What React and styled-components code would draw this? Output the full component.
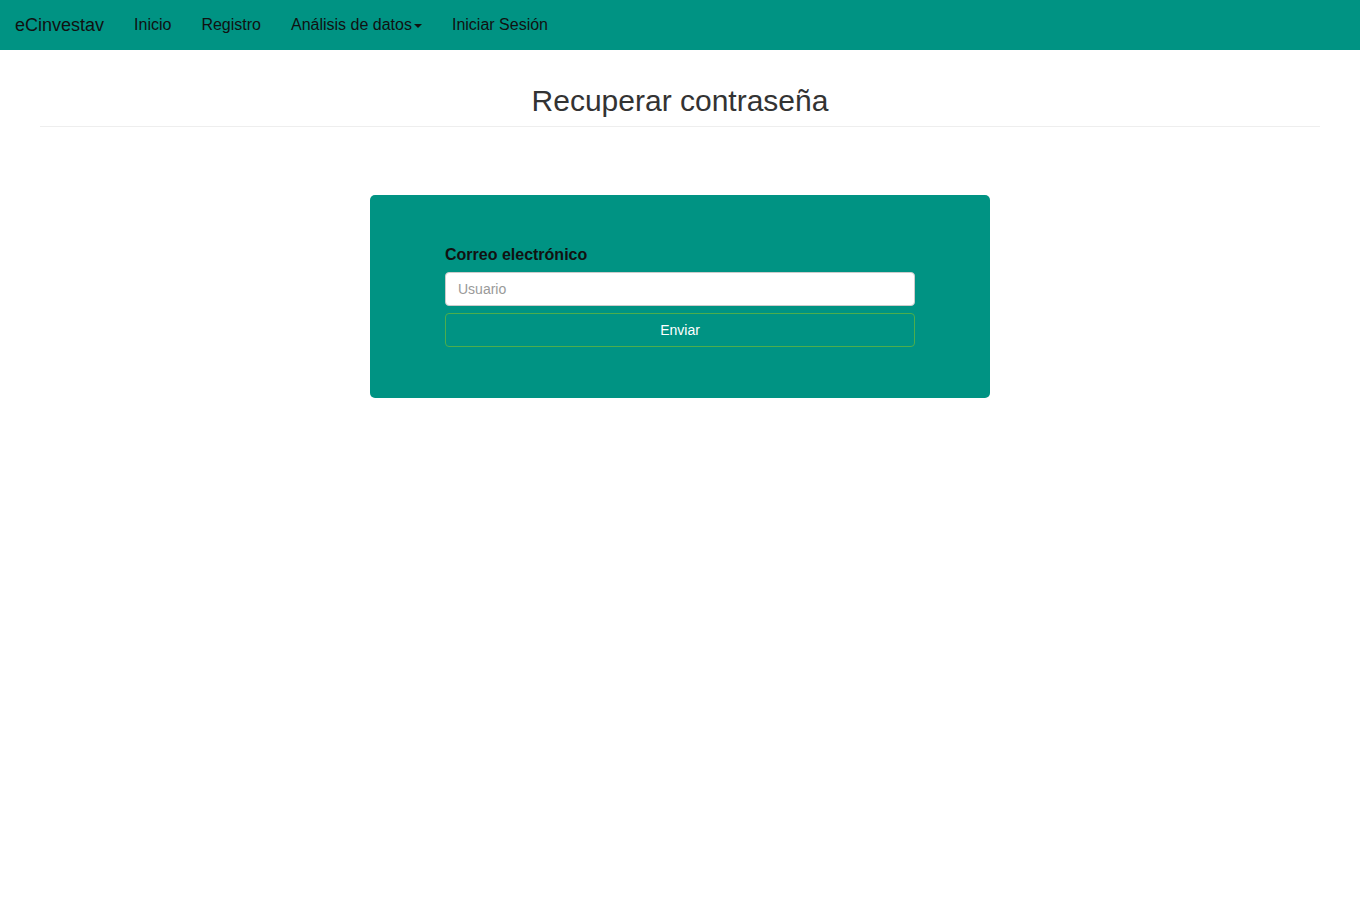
import React from "react";
import styled, { createGlobalStyle } from "styled-components";

const Global = createGlobalStyle`
  * { box-sizing: border-box; }
  body {
    margin: 0;
    font-family: "Liberation Sans", Arial, Helvetica, sans-serif;
    font-size: 14px;
    line-height: 1.42857;
    color: #333;
    background: #fff;
  }
`;

const Navbar = styled.nav`
  height: 50px;
  background: #009383;
  display: flex;
  align-items: stretch;
`;

const Brand = styled.a`
  padding: 15px;
  font-size: 18px;
  line-height: 20px;
  color: #111;
  text-decoration: none;
`;

const NavList = styled.ul`
  list-style: none;
  margin: 0;
  padding: 0;
  display: flex;
`;

const NavLink = styled.a`
  display: flex;
  align-items: center;
  padding: 15px;
  font-size: 16px;
  line-height: 20px;
  color: #111;
  text-decoration: none;
`;

const Caret = styled.span`
  display: inline-block;
  width: 0;
  height: 0;
  margin-left: 2px;
  margin-top: 2px;
  border-top: 4px solid #111;
  border-left: 4px solid transparent;
  border-right: 4px solid transparent;
`;

const PageHeader = styled.div`
  margin: 34px 40px 0;
  padding-bottom: 9px;
  border-bottom: 1px solid #eee;
  text-align: center;
`;

const Title = styled.h1`
  margin: 0;
  font-size: 30px;
  line-height: 33px;
  font-weight: 400;
  color: #333;
`;

const Card = styled.form`
  width: 620px;
  margin: 68px auto 0;
  padding: 50px 75px 51px;
  background: #009383;
  border-radius: 5px;
  display: flex;
  flex-direction: column;
`;

const Label = styled.label`
  font-size: 16px;
  line-height: 20px;
  font-weight: 700;
  color: #111;
  margin-bottom: 7px;
`;

const Input = styled.input`
  height: 34px;
  width: 100%;
  padding: 6px 12px;
  font-family: inherit;
  font-size: 14px;
  color: #555;
  background: #fff;
  border: 1px solid #ccc;
  border-radius: 4px;
  outline: none;
  &::placeholder { color: #999; }
`;

const Button = styled.button`
  margin-top: 7px;
  height: 34px;
  width: 100%;
  font-family: inherit;
  font-size: 14px;
  color: #fff;
  background: transparent;
  border: 1px solid #4cae4c;
  border-radius: 4px;
  cursor: pointer;
`;

export default function App() {
  return (
    <>
      <Global />
      <Navbar>
        <Brand href="#">eCinvestav</Brand>
        <NavList>
          <li><NavLink href="#">Inicio</NavLink></li>
          <li><NavLink href="#">Registro</NavLink></li>
          <li><NavLink href="#">Análisis de datos<Caret /></NavLink></li>
          <li><NavLink href="#">Iniciar Sesión</NavLink></li>
        </NavList>
      </Navbar>
      <PageHeader>
        <Title>Recuperar contraseña</Title>
      </PageHeader>
      <Card onSubmit={(e) => e.preventDefault()}>
        <Label htmlFor="email">Correo electrónico</Label>
        <Input id="email" type="text" placeholder="Usuario" />
        <Button type="submit">Enviar</Button>
      </Card>
    </>
  );
}
